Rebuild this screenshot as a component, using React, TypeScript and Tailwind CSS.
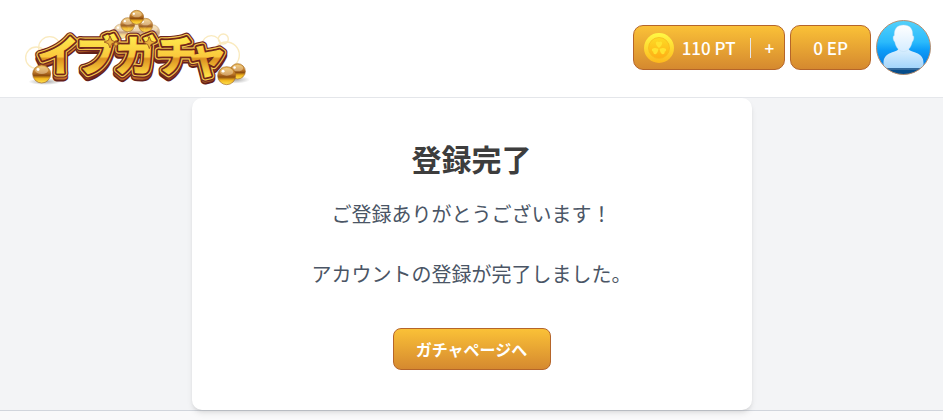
import React from "react";

const goldButton =
  "flex items-center rounded-[10px] border border-[#b5652a] bg-linear-to-b from-[#fac137] to-[#d5892f] font-medium text-white";

function Ball({ x, y, r }: { x: number; y: number; r: number }) {
  return (
    <g>
      <circle cx={x} cy={y} r={r} fill="url(#ball)" stroke="#a56a22" strokeWidth="2" />
      <ellipse cx={x} cy={y - r * 0.42} rx={r * 0.72} ry={r * 0.42} fill="#fff3cf" opacity="0.4" />
      <circle cx={x - r * 0.4} cy={y - r * 0.5} r={r * 0.16} fill="#fff" />
    </g>
  );
}

function Logo() {
  return (
    <svg
      viewBox="27 22 672 240"
      className="h-20 w-56 overflow-visible"
      role="img"
      aria-label="イブガチャ"
    >
      <defs>
        <linearGradient id="face" gradientUnits="userSpaceOnUse" x1="0" y1="98" x2="0" y2="225">
          <stop offset="0" stopColor="#fff04f" />
          <stop offset="0.55" stopColor="#fac83d" />
          <stop offset="0.6" stopColor="#dc9020" />
          <stop offset="1" stopColor="#ffe045" />
        </linearGradient>
        <linearGradient id="side" gradientUnits="userSpaceOnUse" x1="60" y1="0" x2="640" y2="0">
          <stop offset="0" stopColor="#8b3318" />
          <stop offset="0.2" stopColor="#d98a32" />
          <stop offset="0.3" stopColor="#782616" />
          <stop offset="0.5" stopColor="#c9742a" />
          <stop offset="0.65" stopColor="#79250f" />
          <stop offset="0.8" stopColor="#d18431" />
          <stop offset="1" stopColor="#6e2012" />
        </linearGradient>
        <linearGradient id="ball" x1="0" y1="0" x2="0" y2="1">
          <stop offset="0" stopColor="#efbd55" />
          <stop offset="0.4" stopColor="#c07a2a" />
          <stop offset="0.58" stopColor="#8e4d10" />
          <stop offset="0.75" stopColor="#f2b51d" />
          <stop offset="1" stopColor="#ffe452" />
        </linearGradient>
        <radialGradient id="shade">
          <stop offset="0" stopColor="#555" stopOpacity="0.55" />
          <stop offset="1" stopColor="#555" stopOpacity="0" />
        </radialGradient>
      </defs>
      <g fill="none" stroke="#f8e2a4" strokeWidth="4" opacity="0.7">
        <circle cx="64" cy="171" r="32" />
        <circle cx="104" cy="141" r="33" />
        <circle cx="589" cy="133" r="28" />
        <circle cx="625" cy="115" r="15" />
        <circle cx="634" cy="163" r="39" />
      </g>
      <g opacity="0.5">
        <Ball x={318} y={92} r={22} />
        <Ball x={412} y={94} r={22} />
        <Ball x={365} y={92} r={22} />
      </g>
      <g opacity="0.85">
        <Ball x={338} y={72} r={21} />
        <Ball x={392} y={74} r={21} />
      </g>
      <Ball x={365} y={50} r={21} />
      <ellipse cx="90" cy="243" rx="50" ry="10" fill="url(#shade)" />
      <ellipse cx="655" cy="237" rx="50" ry="12" fill="url(#shade)" />
      <g strokeLinejoin="round">
        <use href="#word" y="11" fill="#642019" stroke="#642019" strokeWidth="27" />
        <use href="#word" y="8" fill="url(#side)" stroke="url(#side)" strokeWidth="22" />
        <use href="#word" fill="#6d2423" stroke="#6d2423" strokeWidth="28" />
        <use href="#word" fill="#f4c64d" stroke="#f4c64d" strokeWidth="21" />
        <use href="#word" fill="#722719" stroke="#722719" strokeWidth="14" />
      </g>
      <g fill="url(#face)" stroke="url(#face)" strokeWidth="3">
        <text
          id="word"
          x="67 182 299 420 512"
          y="212 210 211 210 216"
          fontSize="126"
          fontWeight="700"
          fontFamily="'Noto Sans CJK JP', sans-serif"
        >
          イブガチャ
        </text>
      </g>
      <g fill="#e9b23c" stroke="#8c4219" strokeWidth="2">
        <path d="M285 106l5 13 13 5-13 5-5 13-5-13-13-5 13-5z" />
        <path d="M303 119l3 8 8 3-8 3-3 8-3-8-8-3 8-3z" />
        <path d="M403 108l5 13 13 5-13 5-5 13-5-13-13-5 13-5z" />
      </g>
      <Ball x={80} y={220} r={27} />
      <Ball x={668} y={212} r={23} />
      <Ball x={635} y={225} r={27} />
    </svg>
  );
}

function Coin() {
  return (
    <svg viewBox="0 0 30 30" className="size-[30px]" aria-hidden="true">
      <defs>
        <linearGradient id="rim" x1="0" y1="0" x2="0" y2="1">
          <stop offset="0" stopColor="#fffa45" />
          <stop offset="1" stopColor="#fdb81c" />
        </linearGradient>
        <linearGradient id="core" x1="0" y1="0" x2="0" y2="1">
          <stop offset="0" stopColor="#fddb25" />
          <stop offset="1" stopColor="#ffad15" />
        </linearGradient>
      </defs>
      <circle cx="15" cy="15" r="15" fill="url(#rim)" />
      <circle cx="15" cy="15" r="10.5" fill="url(#core)" stroke="#f7b920" strokeWidth="0.8" />
      <g fill="#ffe22f">
        <path id="leaf" d="M15 15c-2-2-3.200-3-3.200-5c0-1.500 2-2.200 3.200-1c1.200-1.200 3.200-.5 3.200 1c0 2-1.200 3-3.200 5z" />
        <use href="#leaf" transform="rotate(120 15 15.500)" />
        <use href="#leaf" transform="rotate(240 15 15.500)" />
      </g>
    </svg>
  );
}

function Avatar() {
  return (
    <svg viewBox="0 0 55 55" className="size-[55px]" aria-hidden="true">
      <defs>
        <clipPath id="round">
          <circle cx="27.500" cy="27.500" r="27" />
        </clipPath>
        <linearGradient id="sky" x1="0" y1="0" x2="0" y2="1">
          <stop offset="0" stopColor="#55d2fb" />
          <stop offset="0.4" stopColor="#2bbafb" />
          <stop offset="0.55" stopColor="#0c9cf8" />
          <stop offset="0.85" stopColor="#0879dd" />
          <stop offset="1" stopColor="#064f91" />
        </linearGradient>
        <linearGradient id="body" x1="0" y1="0" x2="0" y2="1">
          <stop offset="0" stopColor="#e3f3ff" />
          <stop offset="1" stopColor="#a3d5fb" />
        </linearGradient>
        <linearGradient id="head" x1="0" y1="0" x2="0" y2="1">
          <stop offset="0" stopColor="#fff" />
          <stop offset="1" stopColor="#d6edff" />
        </linearGradient>
      </defs>
      <g clipPath="url(#round)">
        <rect width="55" height="55" fill="url(#sky)" />
        <path
          d="M7.500 48V43c0-5 2-8 7-10c5-2 8-2 8.500-6h9c.5 4 3.500 4 8.500 6c5 2 7 5 7 10v5z"
          fill="url(#body)"
        />
        <path
          d="M27.500 5c6.500 0 9.500 4 9.200 10.500c1.800 0 1.500 5-.5 6.500c-1 5.500-4.500 9.500-8.700 9.500s-7.700-4-8.700-9.500c-2-1.500-2.300-6.500-.5-6.500c-.3-6.500 2.700-10.500 9.200-10.500z"
          fill="url(#head)"
          stroke="#b9d9f2"
          strokeWidth="0.4"
        />
        <path d="M0 49h55" stroke="#43688d" strokeWidth="1.500" />
        <rect y="50" width="55" height="5" fill="#064d8b" />
      </g>
      <circle cx="27.500" cy="27.500" r="27" fill="none" stroke="#b78f70" />
    </svg>
  );
}

export default function App() {
  return (
    <div
      lang="ja"
      className="flex min-h-screen flex-col bg-[#f9f9fa] font-['Noto_Sans_CJK_JP',sans-serif]"
    >
      <header className="flex min-h-[98px] items-center justify-between border-b border-gray-200 bg-white pr-3 pb-[2px] pl-6">
        <a href="#">
          <Logo />
        </a>
        <div className="flex items-center gap-[5px]">
          <button type="button" className={`${goldButton} h-[45px] px-[10px] text-[17px]`}>
            <Coin />
            <span className="ml-2">110 PT</span>
            <span className="mx-[14px] h-5 w-px bg-gray-200" />
            <span>+</span>
          </button>
          <button type="button" className={`${goldButton} h-[45px] px-[22px] text-[17px]`}>
            0 EP
          </button>
          <button type="button" aria-label="アカウント" className="rounded-full">
            <Avatar />
          </button>
        </div>
      </header>

      <main className="flex justify-center bg-gray-100">
        <section className="z-10 flex w-full max-w-[560px] flex-col items-center rounded-[10px] bg-white px-6 pt-[38px] pb-10 text-center shadow-md">
          <h1 className="text-[30px] leading-[45px] font-bold text-[#3d3d3d]">登録完了</h1>
          <p className="mt-[18px] text-[20px] leading-[30px] text-gray-600">
            ご登録ありがとうございます！
            <br />
            <br />
            アカウントの登録が完了しました。
          </p>
          <a
            href="#"
            className="mt-[39px] flex h-[42px] min-w-[158px] items-center justify-center rounded-lg border border-[#b5652a] bg-linear-to-b from-[#fac137] to-[#d5892f] px-5 text-[16px] font-bold text-white"
          >
            ガチャページへ
          </a>
        </section>
      </main>
      <footer className="border-t border-gray-300" />
    </div>
  );
}
